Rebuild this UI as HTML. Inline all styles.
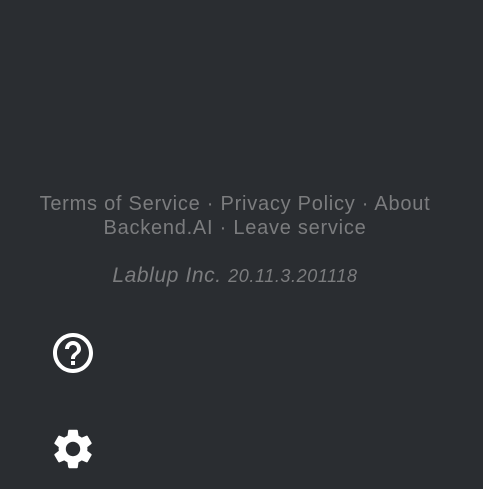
<!DOCTYPE html>
<html><head><style>
html,body{margin:0;padding:0;background:#2a2d31;width:483px;height:489px;overflow:hidden}
.t{position:absolute;left:0;width:470px;text-align:center;color:#7b7c7e;font-family:"Liberation Sans",sans-serif;font-size:20px;white-space:nowrap;letter-spacing:0.75px}
</style></head><body>
<div class="t" style="top:193px">Terms of Service · Privacy Policy · About</div>
<div class="t" style="top:217px">Backend.AI · Leave service</div>
<div class="t" style="top:264px;font-style:italic;font-size:21px;letter-spacing:0.6px">Lablup Inc. <span style="font-size:18px">20.11.3.201118</span></div>
<svg style="position:absolute;left:49px;top:329px" width="48" height="48" viewBox="0 0 24 24"><path fill="#fff" d="M11 18h2v-2h-2v2zm1-16C6.48 2 2 6.48 2 12s4.48 10 10 10 10-4.48 10-10S17.52 2 12 2zm0 18c-4.41 0-8-3.59-8-8s3.590-8 8-8 8 3.59 8 8-3.59 8-8 8zm0-14c-2.21 0-4 1.79-4 4h2c0-1.1.9-2 2-2s2 .9 2 2c0 2-3 1.75-3 5h2c0-2.25 3-2.5 3-5 0-2.21-1.79-4-4-4z"/></svg>
<svg style="position:absolute;left:49px;top:425px" width="48" height="48" viewBox="0 0 24 24"><path fill="#fff" d="M19.14 12.94c.04-.3.06-.61.06-.94 0-.32-.02-.64-.07-.94l2.030-1.58a.49.49 0 0 0 .12-.61l-1.92-3.32a.488.488 0 0 0-.59-.22l-2.39.96c-.5-.38-1.03-.7-1.62-.94l-.36-2.54a.484.484 0 0 0-.48-.41h-3.84c-.24 0-.43.17-.47.41l-.36 2.54c-.59.24-1.13.57-1.62.94l-2.39-.96c-.22-.08-.47 0-.59.22L2.74 8.87c-.12.21-.08.47.12.61l2.03 1.58c-.05.3-.09.63-.09.94s.2.64.07.94l-2.03 1.58a.49.49 0 0 0-.12.61l1.92 3.32c.12.22.37.29.59.22l2.39-.96c.5.38 1.03.7 1.62.94l.36 2.54c.5.24.24.41.48.41h3.84c.24 0 .44-.17.47-.41l.36-2.54c.59-.24 1.13-.56 1.62-.94l2.39.96c.22.08.47 0 .59-.22l1.92-3.32c.12-.22.07-.47-.12-.61l-2.01-1.58zM12 15.6c-1.98 0-3.6-1.62-3.6-3.6s1.62-3.6 3.6-3.6 3.6 1.62 3.6 3.6-1.62 3.6-3.6 3.6z"/></svg>
</body></html>
